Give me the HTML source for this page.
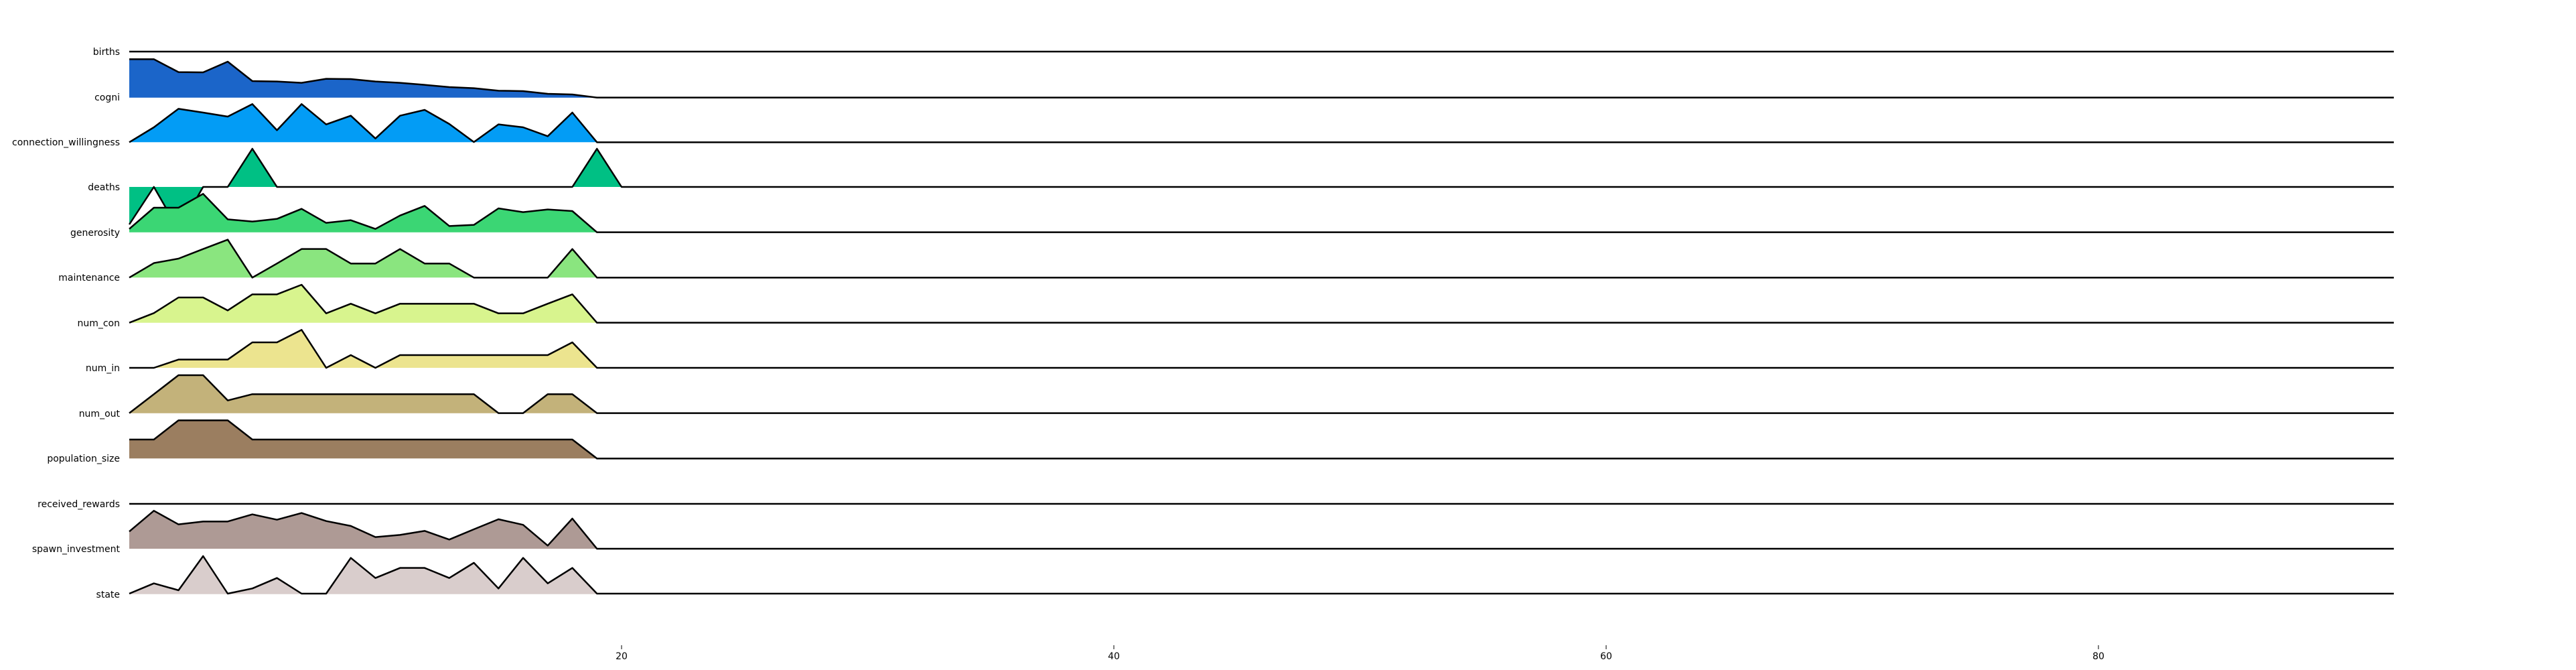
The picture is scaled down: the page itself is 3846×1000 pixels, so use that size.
<!DOCTYPE html>
<html><head><meta charset="utf-8"><style>
html,body{margin:0;padding:0;background:#fff;width:3846px;height:1000px;overflow:hidden}
svg text{font-family:"DejaVu Sans","Liberation Sans",sans-serif;font-size:14px;fill:#000}
</style></head><body>
<svg id="s" width="3846" height="1000" xmlns="http://www.w3.org/2000/svg">
<g id="plots"></g>
<g text-anchor="end">
<text x="179" y="82">births</text>
<text x="179" y="150">cogni</text>
<text x="179" y="217">connection_willingness</text>
<text x="179" y="284">deaths</text>
<text x="179" y="352">generosity</text>
<text x="179" y="419">maintenance</text>
<text x="179" y="487">num_con</text>
<text x="179" y="554">num_in</text>
<text x="179" y="622">num_out</text>
<text x="179" y="689">population_size</text>
<text x="179" y="757">received_rewards</text>
<text x="179" y="824">spawn_investment</text>
<text x="179" y="892">state</text>
</g>
<g stroke="#000" stroke-width="1">
<line x1="928" y1="963" x2="928" y2="969"/><line x1="1663" y1="963" x2="1663" y2="969"/>
<line x1="2398" y1="963" x2="2398" y2="969"/><line x1="3133" y1="963" x2="3133" y2="969"/>
</g>
<g text-anchor="middle">
<text x="928" y="984">20</text><text x="1663" y="984">40</text>
<text x="2398" y="984">60</text><text x="3133" y="984">80</text>
</g>
</svg>
<script>
var X=function(i){return 193+36.75*i};
var END=3574;
function z(arr,off){return arr.map(function(v){return v/3+off});}
var S=[
 {b:77,c:null,d:null},
 {b:145.7,c:"#1b65c9",d:z([115,115,173,174,126,213,215,221,203,204,215,221,230,240,245,256,258,270,273,287],50)},
 {b:212.3,c:"#039cf5",d:z([487,420,337,354,372,316,433,316,407,368,470,368,342,405,486,407,420,460,354,487],50)},
 {b:279,c:"#00c084",d:null,special:true},
 {b:346.7,c:"#3bd674",d:z([875,780,780,718,832,842,830,785,848,836,875,815,772,862,857,783,800,788,795,890],50)},
 {b:414.3,c:"#8ae57f",d:z([343,278,258,215,173,343,280,215,215,280,280,215,280,280,343,343,343,343,215,343],300)},
 {b:481.7,c:"#d8f48e",d:z([545,502,432,432,490,418,418,375,503,460,503,460,460,460,460,503,503,460,418,545],300)},
 {b:549,c:"#ece48f",d:z([747,747,710,710,710,633,633,577,747,690,747,690,690,690,690,690,690,690,633,747],300)},
 {b:616.7,c:"#c3b27a",d:z([200,115,30,30,143,115,115,115,115,115,115,115,115,115,115,200,200,115,115,200],550)},
 {b:684.3,c:"#9b7e60",d:z([318,318,232,232,232,318,318,318,318,318,318,318,318,318,318,318,318,318,318,403],550)},
 {b:752,c:null,d:null},
 {b:819,c:"#ae9a95",d:z([730,637,698,685,685,653,677,647,683,705,755,745,727,766,720,675,700,793,672,807],550)},
 {b:886.7,c:"#d9cdcc",d:z([1008,962,993,840,1008,985,938,1008,1008,848,938,893,893,938,870,985,848,962,893,1008],550)}
];
var h="";
S.forEach(function(s){
 if(s.special){
  var b=s.b;
  var pts=[[X(0),335],[X(1),b],[X(2),343],[X(3),b],[X(4),b],[X(5),222],[X(6),b]];
  var fill="M"+X(0)+","+b+" L"+pts.map(function(p){return p[0]+","+p[1]}).join(" L")+" Z";
  var fill2="M"+X(18)+","+b+" L"+X(19)+",222 L"+X(20)+","+b+" Z";
  h+='<path d="'+fill+'" fill="'+s.c+'"/><path d="'+fill2+'" fill="'+s.c+'"/>';
  h+='<polyline points="'+pts.map(function(p){return p.join(",")}).join(" ")+" "+X(18)+","+b+" "+X(19)+",222 "+X(20)+","+b+" "+END+","+b+'" fill="none" stroke="#000" stroke-width="2.5" stroke-linejoin="round"/>';
  return;
 }
 if(!s.d){h+='<line x1="193" y1="'+s.b+'" x2="'+END+'" y2="'+s.b+'" stroke="#000" stroke-width="2.5"/>';return;}
 var p=s.d.map(function(v,i){return X(i)+","+v});
 h+='<path d="M'+X(0)+","+s.b+" L"+p.join(" L")+" L"+X(19)+","+s.b+' Z" fill="'+s.c+'"/>';
 h+='<polyline points="'+p.join(" ")+" "+END+","+s.d[19]+'" fill="none" stroke="#000" stroke-width="2.5" stroke-linejoin="round"/>';
});
document.getElementById("plots").innerHTML=h;
</script>
</body></html>
